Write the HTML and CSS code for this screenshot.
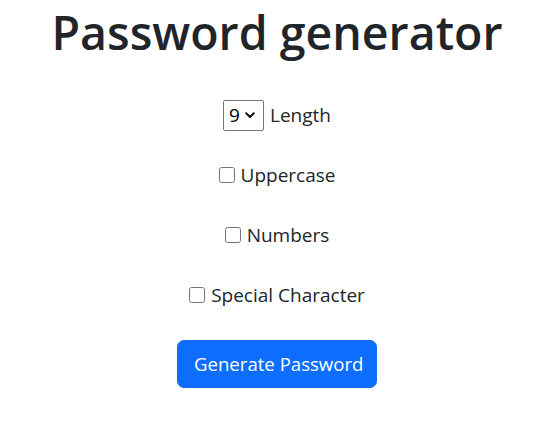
FILE: index.html
```html
<!DOCTYPE html>
<html lang="en">
<head>
<meta charset="utf-8">
<title>Password generator</title>
<link rel="stylesheet" href="styles.css">
</head>
<body>
<main class="app">
  <h1 class="title">Password generator</h1>
  <div class="options">
    <div class="row">
      <span class="select-wrap">
        <select class="length-select">
          <option>8</option>
          <option selected>9</option>
          <option>10</option>
        </select>
        <svg class="chevron" width="10" height="7" viewBox="0 0 10 7" aria-hidden="true"><path d="M1.2 1.3 L5 5 L8.8 1.3" fill="none" stroke="#111" stroke-width="2" stroke-linecap="round" stroke-linejoin="round"/></svg>
      </span>
      <label>Length</label>
    </div>
    <div class="row">
      <input type="checkbox" id="upper">
      <label for="upper">Uppercase</label>
    </div>
    <div class="row">
      <input type="checkbox" id="num">
      <label for="num">Numbers</label>
    </div>
    <div class="row">
      <input type="checkbox" id="spec">
      <label for="spec">Special Character</label>
    </div>
  </div>
  <button class="btn">Generate Password</button>
</main>
</body>
</html>
```
FILE: styles.css
```css
* { box-sizing: border-box; }
html, body { margin: 0; padding: 0; background: #fff; }
body {
  font-family: "Open Sans", "Noto Sans", sans-serif;
  color: #212529;
  font-size: 19px;
  line-height: 1.5;
}
.app {
  display: flex;
  flex-direction: column;
  align-items: center;
  padding-right: 5px;
}
.title {
  margin: 0;
  font-size: 46.5px;
  font-weight: 600;
  line-height: normal;
  white-space: nowrap;
}
.options {
  margin-top: 36px;
  display: flex;
  flex-direction: column;
  align-items: center;
  gap: 30px;
}
.row {
  display: flex;
  align-items: center;
  gap: 6px;
  height: 30px;
}
.select-wrap {
  position: relative;
  display: block;
  width: 41px;
  height: 31px;
}
.length-select {
  appearance: none;
  -webkit-appearance: none;
  display: block;
  font-family: inherit;
  font-size: 19px;
  line-height: 29px;
  height: 31px;
  width: 41px;
  padding: 0 0 0 5px;
  color: #000;
  border: 1px solid #767676;
  border-radius: 2px;
  background: #fff;
}
.chevron {
  position: absolute;
  left: 22px;
  top: 12px;
  pointer-events: none;
}
input[type="checkbox"] { margin: 0; width: 16px; height: 16px; }
.btn {
  margin-top: 30px;
  font-family: inherit;
  font-size: 18.6px;
  line-height: 1.5;
  white-space: nowrap;
  color: #fff;
  background: #0d6efd;
  border: 1px solid #0d6efd;
  border-radius: 7px;
  padding: 8px 16px;
  width: 200px;
  height: 48px;
}
```
